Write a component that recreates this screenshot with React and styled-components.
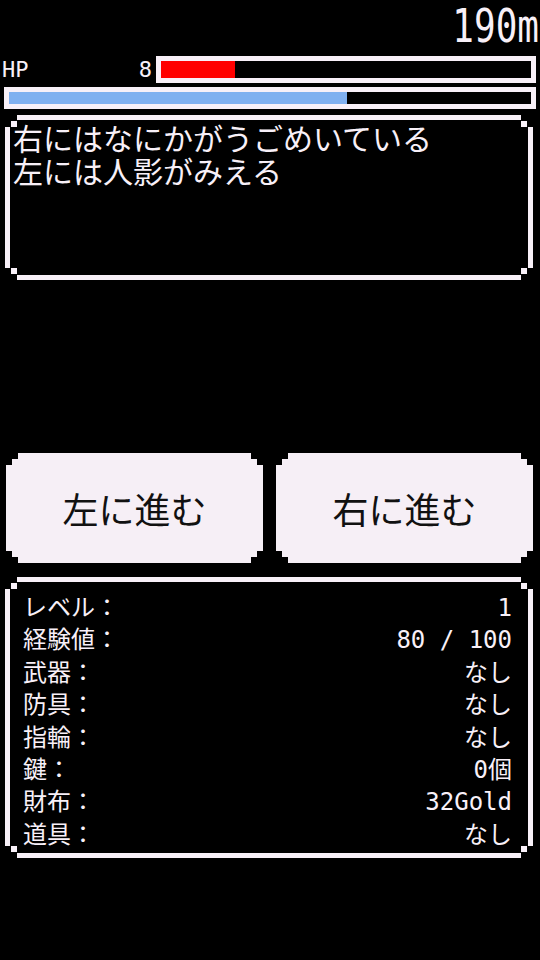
import React from "react";
import styled, { createGlobalStyle, css } from "styled-components";

const GlobalStyle = createGlobalStyle`
  html, body {
    margin: 0;
    padding: 0;
    background: #000;
  }
  body {
    font-family: "DejaVu Sans Mono", "Noto Sans CJK JP", monospace;
    color: #f8f0f8;
  }
`;

const WHITE = "#f8f0f8";

// two-step pixel staircase on every corner
const stairCorners = css`
  clip-path: polygon(
    12px 0, calc(100% - 12px) 0, calc(100% - 12px) 6px, calc(100% - 6px) 6px,
    calc(100% - 6px) 12px, 100% 12px, 100% calc(100% - 12px),
    calc(100% - 6px) calc(100% - 12px), calc(100% - 6px) calc(100% - 6px),
    calc(100% - 12px) calc(100% - 6px), calc(100% - 12px) 100%, 12px 100%,
    12px calc(100% - 6px), 6px calc(100% - 6px), 6px calc(100% - 12px),
    0 calc(100% - 12px), 0 12px, 6px 12px, 6px 6px, 12px 6px
  );
`;

const notchCorners = css`
  clip-path: polygon(
    7px 0, calc(100% - 7px) 0, calc(100% - 7px) 7px, 100% 7px,
    100% calc(100% - 7px), calc(100% - 7px) calc(100% - 7px),
    calc(100% - 7px) 100%, 7px 100%, 7px calc(100% - 7px),
    0 calc(100% - 7px), 0 7px, 7px 7px
  );
`;

const Screen = styled.div`
  width: 540px;
  height: 960px;
  box-sizing: border-box;
  padding: 0 4px;
  display: flex;
  flex-direction: column;
  background: #000;
  overflow: hidden;
`;

const Distance = styled.div`
  height: 52px;
  line-height: 52px;
  font-size: 36px;
  text-align: right;
  margin-right: -3px;
  transform: scaleY(1.3);
`;

const HpRow = styled.div`
  display: flex;
  align-items: center;
  height: 27px;
  margin-top: 4px;
`;

const HpLabel = styled.div`
  flex: 1;
  font-size: 22px;
  margin-left: -2px;
`;

const HpValue = styled.div`
  font-size: 22px;
  margin-right: 4px;
`;

const Bar = styled.div`
  box-sizing: border-box;
  width: ${(p) => p.$width || "100%"};
  height: ${(p) => p.$height}px;
  margin-top: ${(p) => p.$top || 0}px;
  border: 5px solid ${WHITE};
  background: #000;
  display: flex;
`;

const Fill = styled.div`
  height: 100%;
  background: ${(p) => p.$color};
`;

const Frame = styled.div`
  box-sizing: border-box;
  height: ${(p) => p.$height}px;
  margin: ${(p) => p.$top}px 3px 0 1px;
  padding: 5px;
  background: ${WHITE};
  ${stairCorners}
`;

const FrameInner = styled.div`
  box-sizing: border-box;
  height: 100%;
  background: #000;
  ${notchCorners}
`;

const Message = styled.div`
  padding: 1px 3px;
  font-family: "Noto Sans CJK JP", sans-serif;
  font-size: 30px;
  color: ${WHITE};
`;

const MessageLine = styled.div`
  height: 33px;
  line-height: 33px;
  white-space: nowrap;
`;

const Buttons = styled.div`
  display: flex;
  gap: 13px;
  margin: 173px 3px 0 2px;
`;

const Button = styled.button`
  flex: 1;
  height: 110px;
  border: none;
  padding: 0;
  background: #f6eff6;
  color: #111;
  font-family: "Noto Sans CJK JP", sans-serif;
  font-size: 36px;
  cursor: pointer;
  ${stairCorners}
`;

const Stats = styled.div`
  padding: 10px 16px 0 13px;
  font-size: 24px;
  line-height: 32.4px;
`;

const StatRow = styled.div`
  display: flex;
  justify-content: space-between;
`;

const stats = [
  ["レベル：", "1"],
  ["経験値：", "80 / 100"],
  ["武器：", "なし"],
  ["防具：", "なし"],
  ["指輪：", "なし"],
  ["鍵：", "0個"],
  ["財布：", "32Gold"],
  ["道具：", "なし"],
];

const messages = ["右にはなにかがうごめいている", "左には人影がみえる"];

const App = () => {
  const hp = 8;
  const maxHp = 40;

  return (
    <>
      <GlobalStyle />
      <Screen>
        <Distance>190m</Distance>
        <HpRow>
          <HpLabel>HP</HpLabel>
          <HpValue>{hp}</HpValue>
          <Bar $width="380px" $height={27}>
            <Fill $color="#ff0000" style={{ width: `${(hp / maxHp) * 100}%` }} />
          </Bar>
        </HpRow>
        <Bar $height={22} $top={4}>
          <Fill $color="#80b0f0" style={{ width: "64.7%" }} />
        </Bar>
        <Frame $height={165} $top={6}>
          <FrameInner>
            <Message>
              {messages.map((m) => (
                <MessageLine key={m}>{m}</MessageLine>
              ))}
            </Message>
          </FrameInner>
        </Frame>
        <Buttons>
          <Button>左に進む</Button>
          <Button>右に進む</Button>
        </Buttons>
        <Frame $height={281} $top={14}>
          <FrameInner>
            <Stats>
              {stats.map(([label, value]) => (
                <StatRow key={label}>
                  <span>{label}</span>
                  <span>{value}</span>
                </StatRow>
              ))}
            </Stats>
          </FrameInner>
        </Frame>
      </Screen>
    </>
  );
};

export default App;
